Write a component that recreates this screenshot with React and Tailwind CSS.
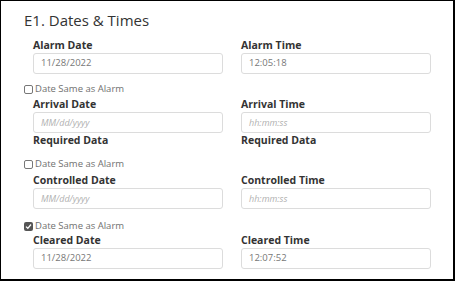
import React from "react";

const font = { fontFamily: '"Open Sans", "Noto Sans", sans-serif' };

function Field({ label, value, placeholder, required }) {
  return (
    <div className="flex flex-col">
      <div className="h-[14px] text-[10.5px] leading-[14px] font-bold text-[#333]">{label}</div>
      <div className="mt-[1px] h-[21px] rounded-[3px] border border-[#dcdcdc] flex items-center px-[7px]">
        {value ? (
          <span className="text-[9.5px] text-[#777]">{value}</span>
        ) : (
          <span className="text-[9px] italic text-[#b0b0b0]">{placeholder}</span>
        )}
      </div>
      {required && (
        <div className="h-[14px] text-[10.5px] leading-[14px] font-bold text-[#333]">Required Data</div>
      )}
    </div>
  );
}

function Check({ checked }) {
  return (
    <div className="flex items-center h-[14px] text-[9.5px] text-[#707070]">
      {checked ? (
        <span className="w-[9px] h-[9px] rounded-[2px] bg-[#555] flex items-center justify-center mr-[2px]">
          <svg width="7" height="7" viewBox="0 0 7 7"><path d="M1 3.6 L2.8 5.3 L6 1.5" stroke="white" strokeWidth="1.3" fill="none" /></svg>
        </span>
      ) : (
        <span className="w-[9px] h-[9px] rounded-[2px] border border-[#777] bg-white mr-[2px]" />
      )}
      <span>Date Same as Alarm</span>
    </div>
  );
}

function Row({ left, right }) {
  return (
    <div className="grid grid-cols-[190px_190px] gap-x-[18px] pl-[9px]">
      <Field {...left} />
      <Field {...right} />
    </div>
  );
}

export default function App() {
  return (
    <div style={font} className="w-[455px] h-[281px] bg-white border-l border-t border-r-2 border-b-2 border-black overflow-hidden">
      <div className="pl-[23px] pt-[8px]">
        <div className="h-[22px] text-[15px] leading-[22px] text-[#333]">E1. Dates &amp; Times</div>
        <div className="mt-[7px]">
          <Row left={{ label: "Alarm Date", value: "11/28/2022" }} right={{ label: "Alarm Time", value: "12:05:18" }} />
        </div>
        <div className="mt-[8px]"><Check /></div>
        <div className="mt-[1px]">
          <Row
            left={{ label: "Arrival Date", placeholder: "MM/dd/yyyy", required: true }}
            right={{ label: "Arrival Time", placeholder: "hh:mm:ss", required: true }}
          />
        </div>
        <div className="mt-[10px]"><Check /></div>
        <div className="mt-[2px]">
          <Row left={{ label: "Controlled Date", placeholder: "MM/dd/yyyy" }} right={{ label: "Controlled Time", placeholder: "hh:mm:ss" }} />
        </div>
        <div className="mt-[10px]"><Check checked /></div>
        <div className="mt-[0px]">
          <Row left={{ label: "Cleared Date", value: "11/28/2022" }} right={{ label: "Cleared Time", value: "12:07:52" }} />
        </div>
      </div>
    </div>
  );
}
